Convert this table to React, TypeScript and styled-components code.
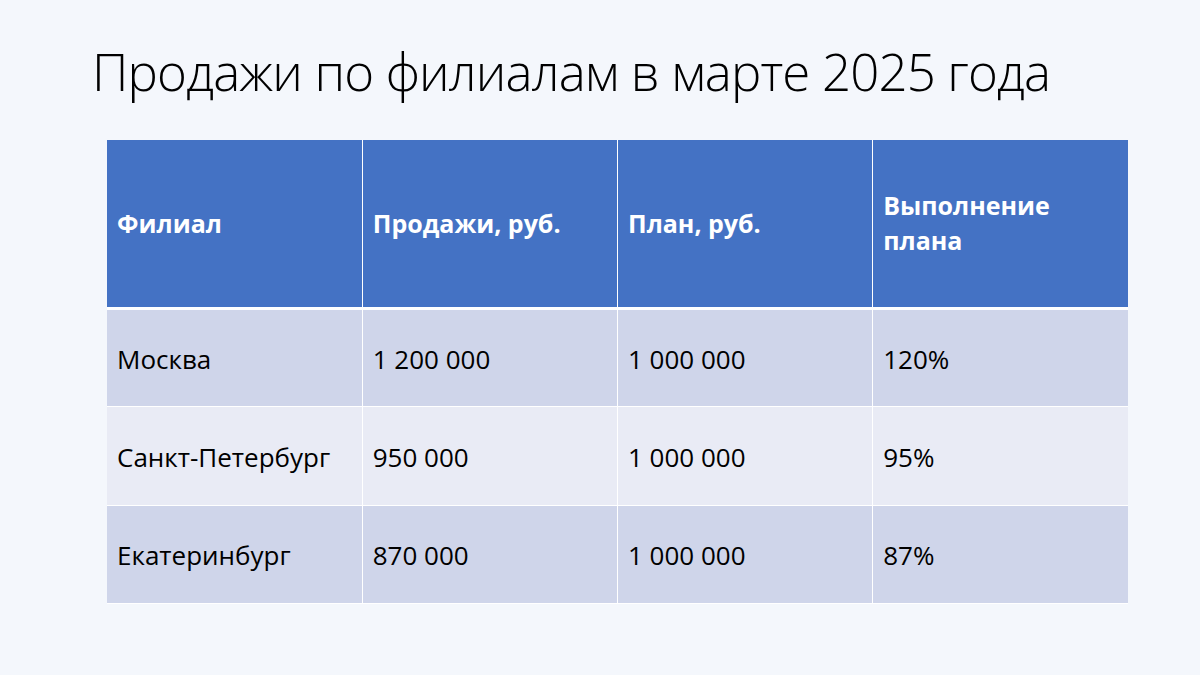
import styled, { createGlobalStyle } from 'styled-components';

const GlobalStyle = createGlobalStyle`
  html, body {
    margin: 0;
    padding: 0;
    background: #f4f7fc;
  }
  body {
    font-family: "Open Sans", "Noto Sans", sans-serif;
  }
`;

type Row = {
  branch: string;
  sales: string;
  plan: string;
  done: string;
};

const rows: Row[] = [
  { branch: 'Москва', sales: '1 200 000', plan: '1 000 000', done: '120%' },
  { branch: 'Санкт-Петербург', sales: '950 000', plan: '1 000 000', done: '95%' },
  { branch: 'Екатеринбург', sales: '870 000', plan: '1 000 000', done: '87%' },
];

function App() {
  return (
    <Slide>
      <GlobalStyle />
      <Title>Продажи по филиалам в марте 2025 года</Title>
      <Table>
        <thead>
          <tr>
            <HeadCell>Филиал</HeadCell>
            <HeadCell>Продажи, руб.</HeadCell>
            <HeadCell>План, руб.</HeadCell>
            <HeadCell>
              Выполнение
              <br />
              плана
            </HeadCell>
          </tr>
        </thead>
        <tbody>
          {rows.map((r, i) => (
            <BodyRow key={r.branch} $odd={i % 2 === 0}>
              <Cell>{r.branch}</Cell>
              <Cell>{r.sales}</Cell>
              <Cell>{r.plan}</Cell>
              <Cell>{r.done}</Cell>
            </BodyRow>
          ))}
        </tbody>
      </Table>
    </Slide>
  );
}

const Slide = styled.div`
  width: 1200px;
  height: 675px;
  box-sizing: border-box;
  padding: 40px 60px 0 92px;
  background: #f4f7fc;
  overflow: hidden;
`;

const Title = styled.h1`
  margin: 0 0 38px 0;
  font-family: "Open Sans", sans-serif;
  font-weight: 300;
  font-size: 51px;
  line-height: 62px;
  color: #000;
  letter-spacing: -0.85px;
  white-space: nowrap;
`;

const Table = styled.table`
  margin-left: 15px;
  width: 1021px;
  border-collapse: collapse;
  table-layout: fixed;
  font-size: 26px;
`;

const HeadCell = styled.th`
  height: 168px;
  box-sizing: border-box;
  padding: 0 10px;
  background: #4472c4;
  color: #fff;
  font-size: 25px;
  font-weight: 700;
  text-align: left;
  vertical-align: middle;
  line-height: 35px;
  border-left: 1px solid #fff;
  border-right: 1px solid #fff;
  border-bottom: 3px solid #fff;
  &:first-child {
    border-left: none;
  }
  &:last-child {
    border-right: none;
  }
`;

const BodyRow = styled.tr<{ $odd: boolean }>`
  background: ${(p) => (p.$odd ? '#cfd5ea' : '#e9ebf5')};
`;

const Cell = styled.td`
  height: 98.5px;
  box-sizing: border-box;
  padding: 2px 10px 0;
  color: #000;
  vertical-align: middle;
  border: 1px solid #fff;
  &:first-child {
    border-left: none;
  }
  &:last-child {
    border-right: none;
  }
`;

export default App;
